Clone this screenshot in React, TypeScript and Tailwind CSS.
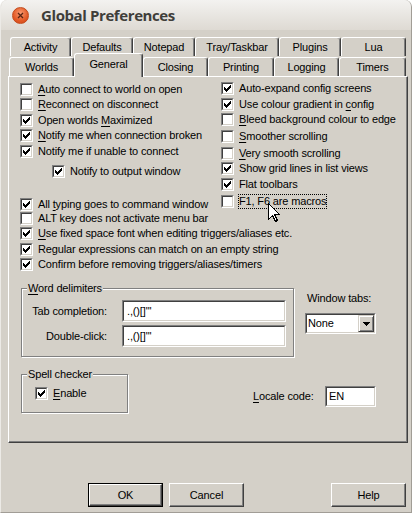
import React from 'react';
import clsx from 'clsx';

type Item = { text: string; u?: number; checked: boolean; mt: string; indent?: boolean; focus?: boolean };

const leftItems: Item[] = [
  { text: 'Auto connect to world on open', u: 0, checked: false, mt: '' },
  { text: 'Reconnect on disconnect', u: 0, checked: false, mt: 'mt-[2px]' },
  { text: 'Open worlds Maximized', u: 12, checked: true, mt: 'mt-[3px]' },
  { text: 'Notify me when connection broken', u: 0, checked: true, mt: 'mt-[2px]' },
  { text: 'Notify me if unable to connect', checked: true, mt: 'mt-[3px]' },
  { text: 'Notify to output window', checked: true, mt: 'mt-[7px]', indent: true },
  { text: 'All typing goes to command window', u: 4, checked: true, mt: 'mt-[20px]' },
  { text: 'ALT key does not activate menu bar', checked: false, mt: 'mt-[1px]' },
  { text: 'Use fixed space font when editing triggers/aliases etc.', u: 0, checked: true, mt: 'mt-[2px]' },
  { text: 'Regular expressions can match on an empty string', checked: true, mt: 'mt-[3px]' },
  { text: 'Confirm before removing triggers/aliases/timers', checked: true, mt: 'mt-[2px]' },
];

const rightItems: Item[] = [
  { text: 'Auto-expand config screens', checked: true, mt: '' },
  { text: 'Use colour gradient in config', u: 23, checked: true, mt: 'mt-[3px]' },
  { text: 'Bleed background colour to edge', u: 0, checked: false, mt: 'mt-[2px]' },
  { text: 'Smoother scrolling', u: 0, checked: false, mt: 'mt-[4px]' },
  { text: 'Very smooth scrolling', u: 0, checked: false, mt: 'mt-[4px]' },
  { text: 'Show grid lines in list views', checked: true, mt: 'mt-[2px]' },
  { text: 'Flat toolbars', checked: true, mt: 'mt-[3px]' },
  { text: 'F1, F6 are macros', checked: false, mt: 'mt-[4px]', focus: true },
];

const backTabs = [
  { label: 'Activity', w: 'w-[61px]' },
  { label: 'Defaults', w: 'w-[62px]' },
  { label: 'Notepad', w: 'w-[62px]' },
  { label: 'Tray/Taskbar', w: 'w-[84px]' },
  { label: 'Plugins', w: 'w-[62px]' },
  { label: 'Lua', w: 'w-[65px]' },
];

const frontTabs = [
  { label: 'Worlds', w: 'w-[65px]' },
  { label: 'General', w: 'w-[69px]', selected: true },
  { label: 'Closing', w: 'w-[65px]' },
  { label: 'Printing', w: 'w-[66px]' },
  { label: 'Logging', w: 'w-[65px]' },
  { label: 'Timers', w: 'w-[67px]' },
];

function Label({ text, u }: { text: string; u?: number }) {
  if (u === undefined) return <>{text}</>;
  return (
    <>
      {text.slice(0, u)}
      <span className="underline underline-offset-[2px]">{text[u]}</span>
      {text.slice(u + 1)}
    </>
  );
}

// sunken 3d frame, used for checkboxes and edit fields
function Sunken({ className, children }: { className?: string; children?: React.ReactNode }) {
  return (
    <div className={clsx('border border-t-[#808080] border-l-[#808080] border-b-white border-r-white', className)}>
      <div className="w-full h-full border border-t-[#404040] border-l-[#404040] border-b-[#d4d0c8] border-r-[#d4d0c8] bg-white">
        {children}
      </div>
    </div>
  );
}

function CheckBox({ checked }: { checked: boolean }) {
  return (
    <Sunken className="w-[13px] h-[13px] shrink-0">
      {checked && (
        <svg width="9" height="9" viewBox="0 0 9 9" shapeRendering="crispEdges" className="block">
          <path d="M1 3h1v3H1z M2 4h1v3H2z M3 5h1v3H3z M4 4h1v3H4z M5 3h1v3H5z M6 2h1v3H6z M7 1h1v3H7z" fill="#000" />
        </svg>
      )}
    </Sunken>
  );
}

function Row({ item }: { item: Item }) {
  return (
    <div className={clsx('flex items-center h-[13px] whitespace-nowrap', item.mt, item.indent && 'ml-[32px]')}>
      <CheckBox checked={item.checked} />
      <span className={clsx('leading-[13px]', item.focus ? 'ml-[4px] border border-dotted border-black' : 'ml-[5px]')}>
        <Label text={item.text} u={item.u} />
      </span>
    </div>
  );
}

function Tab({ label, w, selected }: { label: string; w: string; selected?: boolean }) {
  return (
    <div
      className={clsx(
        'flex items-center justify-center rounded-t-[3px] border-t border-l border-r border-t-white border-l-white border-r-[#404040] shadow-[inset_-1px_0_0_#808080] bg-[#d4d0c8]',
        w,
        selected ? 'relative z-10 h-[24px] -mb-px pb-[3px]' : 'h-[19px] pt-px'
      )}
    >
      {label}
    </div>
  );
}

function GroupBox({ title, u, className, children }: { title: string; u?: number; className: string; children?: React.ReactNode }) {
  return (
    <div className={clsx('relative border border-[#808080] shadow-[inset_1px_1px_0_#fff,1px_1px_0_#fff]', className)}>
      <span className="absolute -top-[7px] left-[5px] px-[1px] leading-[13px] bg-[#d4d0c8]">
        <Label text={title} u={u} />
      </span>
      {children}
    </div>
  );
}

function Button({ label, isDefault }: { label: string; isDefault?: boolean }) {
  return (
    <div className={clsx('w-[75px] h-[24px]', isDefault && 'border border-black')}>
      <div className="w-full h-full flex items-center justify-center border-t border-l border-r border-b border-t-white border-l-white border-r-[#404040] border-b-[#404040] shadow-[inset_-1px_-1px_0_#808080]">
        {label}
      </div>
    </div>
  );
}

export default function App() {
  return (
    <div className="relative w-[413px] h-[514px] bg-white overflow-hidden font-['Liberation_Sans',Arial,sans-serif] text-[11px] tracking-[-0.15px] text-black">
      <div className="w-[412px] h-[513px] flex flex-col rounded-t-[7px] overflow-hidden border-l border-r border-b border-l-[#eceae6] border-r-[#a19d96] border-b-[#a19d96] bg-[#d4d0c8]">
        {/* title bar */}
        <div className="h-[30px] shrink-0 flex items-center bg-gradient-to-b from-[#f3f2f0] to-[#dedad3]">
          <div className="ml-[11px] w-[17px] h-[17px] rounded-full flex items-center justify-center border border-[#c24a1c] bg-[radial-gradient(circle_at_50%_35%,#f99a70,#e35a26_60%,#cf4617)]">
            <svg width="7" height="7" viewBox="0 0 7 7">
              <path d="M1 1l5 5M6 1l-5 5" stroke="#5a2412" strokeWidth="1.3" />
            </svg>
          </div>
          <span className="ml-[12px] font-['Open_Sans',sans-serif] font-bold text-[15px] tracking-[-0.4px] text-[#3f3e3a]">Global Preferences</span>
        </div>

        {/* tabs */}
        <div className="mt-[7px] ml-[9px] flex">
          {backTabs.map((t) => (
            <Tab key={t.label} label={t.label} w={t.w} />
          ))}
        </div>
        <div className="ml-[8px] flex items-end h-[20px]">
          {frontTabs.map((t) => (
            <Tab key={t.label} label={t.label} w={t.w} selected={t.selected} />
          ))}
        </div>

        {/* panel */}
        <div className="ml-[7px] w-[400px] h-[367px] shrink-0 border border-t-white border-l-white border-r-[#404040] border-b-[#404040] shadow-[inset_-1px_-1px_0_#808080]">
          <div className="flex">
            <div className="ml-[11px] w-[201px] pt-[6px]">
              {leftItems.map((it) => (
                <Row key={it.text} item={it} />
              ))}
            </div>
            <div className="pt-[5px]">
              {rightItems.map((it) => (
                <Row key={it.text} item={it} />
              ))}
            </div>
          </div>

          <div className="mt-[17px] flex items-start">
            <GroupBox title="Word delimiters" u={0} className="ml-[12px] w-[273px] h-[69px] pt-[11px]">
              <div className="flex items-center">
                <span className="w-[85px] text-right">Tab completion:</span>
                <Sunken className="ml-[15px] w-[164px] h-[22px]">
                  <div className="pl-[3px] leading-[18px]">.,()[]"'</div>
                </Sunken>
              </div>
              <div className="flex items-center mt-[3px]">
                <span className="w-[85px] text-right">Double-click:</span>
                <Sunken className="ml-[15px] w-[164px] h-[22px]">
                  <div className="pl-[3px] leading-[18px]">.,()[]"'</div>
                </Sunken>
              </div>
            </GroupBox>
            <div className="ml-[11px] mt-[4px] flex flex-col">
              <span className="ml-[2px] leading-[13px]">Window tabs:</span>
              <Sunken className="mt-[8px] w-[71px] h-[21px]">
                <div className="flex h-full">
                  <span className="flex-1 pl-[1px] leading-[17px]">None</span>
                  <div className="w-[16px] h-full flex items-center justify-center border border-t-[#d4d0c8] border-l-[#d4d0c8] border-r-[#404040] border-b-[#404040] shadow-[inset_1px_1px_0_#fff,inset_-1px_-1px_0_#808080] bg-[#d4d0c8]">
                    <svg width="7" height="4" viewBox="0 0 7 4" shapeRendering="crispEdges">
                      <path d="M0 0h7L3.5 4z" fill="#000" />
                    </svg>
                  </div>
                </div>
              </Sunken>
            </div>
          </div>

          <div className="mt-[17px] flex items-start">
            <GroupBox title="Spell checker" className="ml-[12px] w-[107px] h-[39px] pt-[12px] pl-[13px]">
              <div className="flex items-center h-[13px]">
                <CheckBox checked />
                <span className="ml-[5px] leading-[13px]">
                  <Label text="Enable" u={0} />
                </span>
              </div>
            </GroupBox>
            <div className="ml-[125px] mt-[12px] flex items-center">
              <span className="w-[72px]">
                <Label text="Locale code:" u={0} />
              </span>
              <Sunken className="w-[51px] h-[21px]">
                <div className="pl-[2px] leading-[17px]">EN</div>
              </Sunken>
            </div>
          </div>
        </div>

        {/* buttons */}
        <div className="mt-[40px] ml-[87px] flex">
          <Button label="OK" isDefault />
          <div className="ml-[6px]">
            <Button label="Cancel" />
          </div>
          <div className="ml-[87px]">
            <Button label="Help" />
          </div>
        </div>
      </div>

      {/* mouse pointer */}
      <svg className="absolute left-[268px] top-[203px]" width="12" height="19" viewBox="0 0 12 19" shapeRendering="crispEdges">
        <path d="M0.5 0.5V16.5L4.5 12.5L7.5 18.5L9.5 17.5L6.5 11.5H11.5Z" fill="#fff" stroke="#000" strokeWidth="1" />
      </svg>
    </div>
  );
}
